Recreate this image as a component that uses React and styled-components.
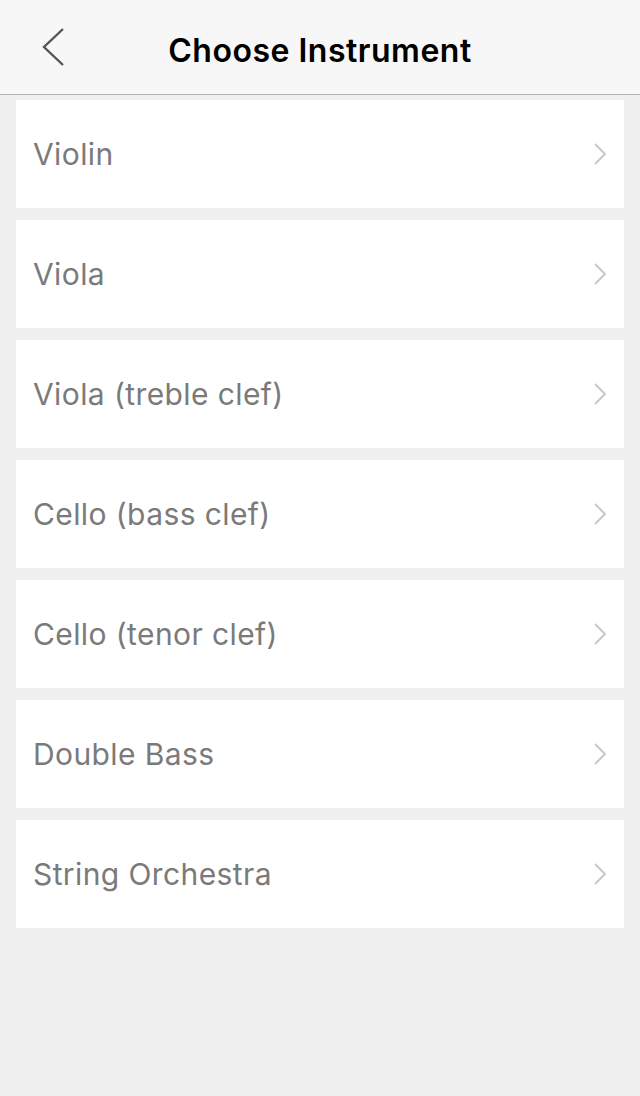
import React from 'react'
import styled, { createGlobalStyle } from 'styled-components'

const GlobalStyle = createGlobalStyle`
  html, body {
    margin: 0;
    padding: 0;
    background: #f0f0f0;
  }
  body {
    font-family: Inter, "Liberation Sans", sans-serif;
  }
`;

const Page = styled.div`
  min-height: 1096px;
  width: 640px;
  background: #f0f0f0;
`;

const Header = styled.header`
  position: relative;
  height: 94px;
  display: flex;
  align-items: center;
  justify-content: center;
  background: #f7f7f7;
  border-bottom: 1px solid #b2b2b2;
`;

const BackButton = styled.button`
  all: unset;
  position: absolute;
  left: 36px;
  top: 22px;
  width: 36px;
  height: 50px;
  display: flex;
  align-items: center;
  justify-content: center;
  cursor: pointer;
`;

const Title = styled.h1`
  margin: 6px 0 0;
  font-size: 32px;
  font-weight: 600;
  color: #000;
  letter-spacing: 0.5px;
`;

const List = styled.div`
  display: flex;
  flex-direction: column;
  gap: 12px;
  padding: 5px 16px 0;
`;

const Row = styled.div`
  height: 108px;
  display: flex;
  align-items: center;
  justify-content: space-between;
  padding: 0 17px;
  background: #fff;
  cursor: pointer;
`;

const Label = styled.span`
  font-size: 30px;
  font-weight: 400;
  color: #7a7a7a;
  letter-spacing: 0.4px;
`;

const instruments = [
  'Violin',
  'Viola',
  'Viola (treble clef)',
  'Cello (bass clef)',
  'Cello (tenor clef)',
  'Double Bass',
  'String Orchestra',
];

const Chevron = () => (
  <svg width="14" height="24" viewBox="0 0 14 24" fill="none">
    <path d="M2 2l10 10-10 10" stroke="#c8c8cc" strokeWidth="2" />
  </svg>
);

export default function App() {
  return (
    <>
      <GlobalStyle />
      <Page>
        <Header>
          <BackButton aria-label="Back">
            <svg width="24" height="40" viewBox="0 0 24 40" fill="none">
              <path d="M21 2L2 20l19 18" stroke="#555" strokeWidth="2.4" />
            </svg>
          </BackButton>
          <Title>Choose Instrument</Title>
        </Header>
        <List>
          {instruments.map((name) => (
            <Row key={name}>
              <Label>{name}</Label>
              <Chevron />
            </Row>
          ))}
        </List>
      </Page>
    </>
  );
}
